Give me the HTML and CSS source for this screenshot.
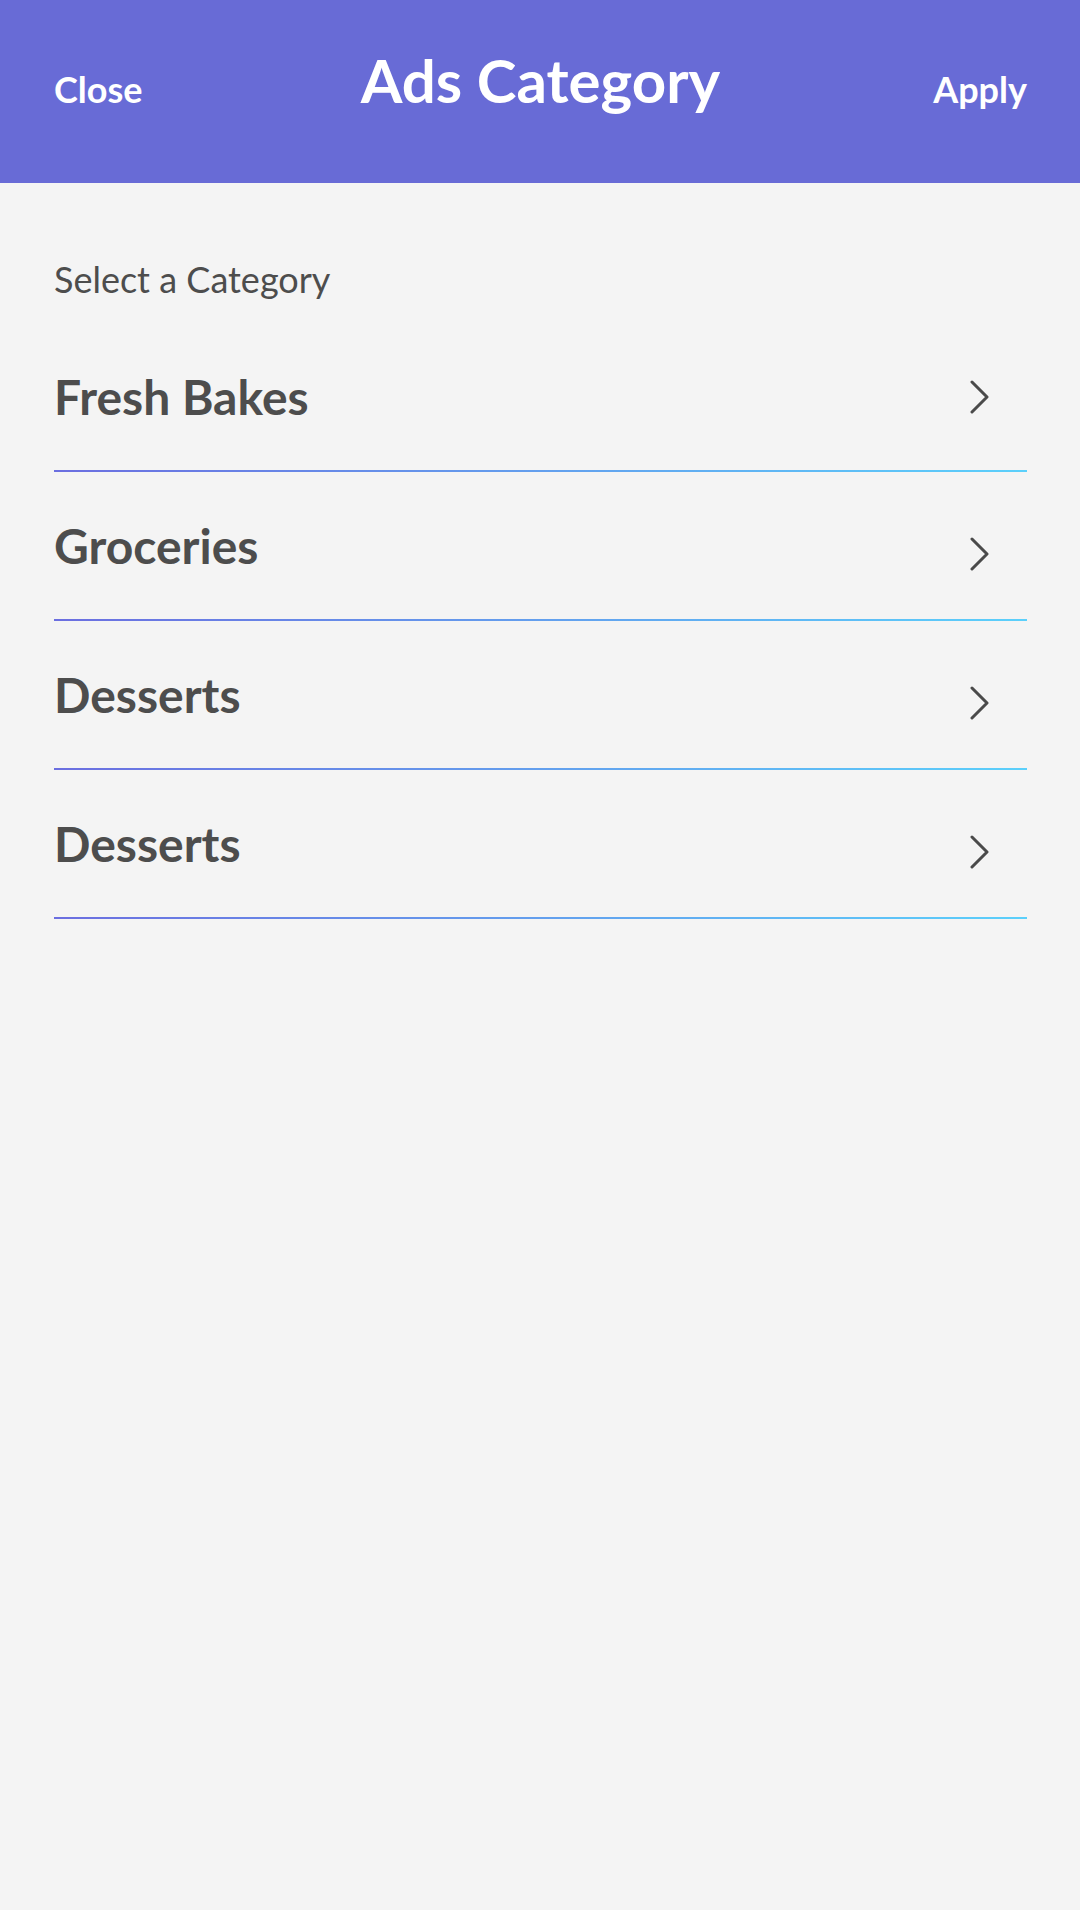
FILE: index.html
```html
<!DOCTYPE html>
<html lang="en">
<head>
<meta charset="utf-8">
<title>Ads Category</title>
<link rel="stylesheet" href="styles.css">
</head>
<body>
<header class="topbar">
  <span class="topbar-action topbar-left">Close</span>
  <h1 class="topbar-title">Ads Category</h1>
  <span class="topbar-action topbar-right">Apply</span>
</header>
<main class="content">
  <p class="section-label">Select a Category</p>
  <ul class="category-list">
    <li class="category-row">
      <span class="category-name">Fresh Bakes</span>
      <svg class="chevron" width="20" height="34" viewBox="0 0 20 34"><path d="M2 2 L17 17 L2 32" fill="none" stroke="#4a4a4a" stroke-width="3" stroke-linecap="round" stroke-linejoin="round"/></svg>
    </li>
    <li class="category-row">
      <span class="category-name">Groceries</span>
      <svg class="chevron" width="20" height="34" viewBox="0 0 20 34"><path d="M2 2 L17 17 L2 32" fill="none" stroke="#4a4a4a" stroke-width="3" stroke-linecap="round" stroke-linejoin="round"/></svg>
    </li>
    <li class="category-row">
      <span class="category-name">Desserts</span>
      <svg class="chevron" width="20" height="34" viewBox="0 0 20 34"><path d="M2 2 L17 17 L2 32" fill="none" stroke="#4a4a4a" stroke-width="3" stroke-linecap="round" stroke-linejoin="round"/></svg>
    </li>
    <li class="category-row">
      <span class="category-name">Desserts</span>
      <svg class="chevron" width="20" height="34" viewBox="0 0 20 34"><path d="M2 2 L17 17 L2 32" fill="none" stroke="#4a4a4a" stroke-width="3" stroke-linecap="round" stroke-linejoin="round"/></svg>
    </li>
  </ul>
</main>
</body>
</html>
```

FILE: styles.css
```css
* { box-sizing: border-box; }
html, body {
  margin: 0;
  padding: 0;
  background: #f4f4f4;
  font-family: Lato, "Liberation Sans", sans-serif;
}
body { min-height: 1910px; }

.topbar {
  height: 183px;
  background: #686bd6;
  display: grid;
  grid-template-columns: 1fr auto 1fr;
  align-items: baseline;
  padding: 44px 53px 0 54px;
  color: #ffffff;
}
.topbar-action {
  font-size: 36px;
  font-weight: 700;
}
.topbar-left { justify-self: start; }
.topbar-right { justify-self: end; }
.topbar-title {
  margin: 0;
  font-size: 60px;
  font-weight: 700;
  line-height: normal;
}

.content {
  padding: 0 53px 0 54px;
}
.section-label {
  margin: 74px 0 0;
  font-size: 36px;
  font-weight: 400;
  color: #4d4d4d;
  line-height: normal;
}
.category-list {
  list-style: none;
  margin: 22px 0 0;
  padding: 0;
}
.category-row {
  height: 149px;
  display: flex;
  align-items: center;
  justify-content: space-between;
  border-bottom: 2px solid #6b6ee0;
  border-image: linear-gradient(90deg, #6b6ee0, #5bd0fb) 1;
}
.category-name {
  font-size: 48px;
  font-weight: 700;
  color: #4d4d4d;
}
.chevron {
  margin-right: 37px;
  margin-top: 16px;
}
.category-row:first-child .chevron {
  margin-top: 0;
}
```
